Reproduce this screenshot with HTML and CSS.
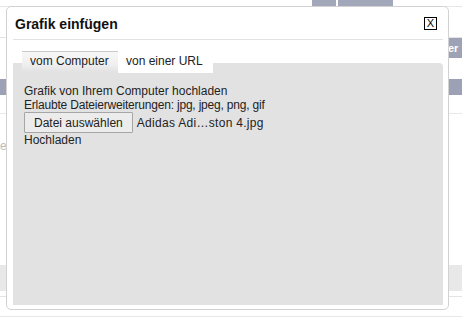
FILE: index.html
```html
<!DOCTYPE html>
<html lang="de">

<head>
  <meta charset="UTF-8">
  <meta name="viewport" content="width=device-width, initial-scale=1.0">
  <title>Grafik einfügen</title>
  <link rel="stylesheet" href="styles.css">
</head>

<body>
  <!-- page behind the dialog -->
  <div class="page">
    <div class="pager">
      <span class="pbtn pbtn_small"></span>
      <span class="pbtn pbtn_wide"></span>
    </div>
    <div class="toolbar">
      <span class="tbtn">er</span>
    </div>
    <div class="headbar"></div>
    <div class="rowline"></div>
    <div class="cell">e</div>
    <div class="footbar"></div>
    <div class="footline"></div>
  </div>

  <div class="dialog">
    <div class="dialog_head">
      <h1>Grafik einfügen</h1>
      <a href="javascript:;" class="close">X</a>
    </div>
    <ul class="tabs">
      <li><a href="javascript:;" class="tab active">vom Computer</a></li>
      <li><a href="javascript:;" class="tab">von einer URL</a></li>
    </ul>
    <div class="panel">
      <p>Grafik von Ihrem Computer hochladen</p>
      <p class="narrow">Erlaubte Dateierweiterungen: jpg, jpeg, png, gif</p>
      <div class="file">
        <button class="file_btn">Datei auswählen</button>
        <span class="file_name">Adidas Adi…ston 4.jpg</span>
      </div>
      <p>Hochladen</p>
    </div>
  </div>
</body>

</html>
```

FILE: styles.css
```css
* {
  margin: 0;
  padding: 0;
  box-sizing: border-box;
}

body {
  position: relative;
  width: 462px;
  height: 321px;
  overflow: hidden;
  background-color: #fff;
  font-family: "Liberation Sans", Arial, sans-serif;
  font-size: 12px;
  color: #222;
}

ul {
  list-style: none;
}

a {
  text-decoration: none;
  color: inherit;
}

/* background page */
.pager {
  display: flex;
  gap: 2px;
  height: 7px;
  padding-left: 312px;
  border-bottom: 1px solid #e6e6e6;
}

.pbtn {
  display: block;
  height: 7px;
  background-color: #a3a7ba;
}

.pbtn_small {
  width: 24px;
}

.pbtn_wide {
  width: 55px;
}

.toolbar {
  display: flex;
  justify-content: flex-end;
  height: 20px;
  margin-top: 30px;
  border-top: 1px solid #e3e3e3;
}

.tbtn {
  display: block;
  width: 15px;
  height: 20px;
  padding-left: 1px;
  background-color: #9ea2b7;
  color: #fff;
  font-size: 11px;
  font-weight: bold;
  line-height: 20px;
}

.headbar {
  height: 16px;
  margin-top: 22px;
  background-color: #9da1b6;
}

.rowline {
  height: 1px;
  margin-top: 18px;
  background-color: #e8e8e8;
}

.cell {
  margin-top: 25px;
  color: #bbb;
  font-size: 12px;
  line-height: 14px;
}

.footbar {
  height: 26px;
  margin-top: 112px;
  background-color: #e8e8e8;
}

.footline {
  height: 21px;
  margin-top: 5px;
  border-top: 1px solid #e4e4e4;
  border-bottom: 1px solid #e8e8e8;
}

/* dialog */
.dialog {
  position: absolute;
  left: 6px;
  top: 6px;
  width: 443px;
  height: 304px;
  padding: 0 5px 4px 6px;
  background-color: #fff;
  border: 1px solid #d2d2d2;
  border-radius: 5px;
  display: flex;
  flex-direction: column;
}

.dialog_head {
  display: flex;
  justify-content: space-between;
  align-items: center;
  height: 33px;
  padding: 1px 6px 0 2px;
  border-bottom: 1px solid #e2e2e2;
}

.dialog_head h1 {
  font-size: 14px;
  font-weight: bold;
  color: #111;
}

.close {
  display: block;
  width: 13px;
  height: 13px;
  border: 1px solid #000;
  font-size: 11px;
  line-height: 11px;
  text-align: center;
  color: #000;
}

.tabs {
  position: relative;
  z-index: 1;
  display: flex;
  height: 21px;
  margin: 11px 0 -9px 9px;
}

.tab {
  display: block;
  height: 21px;
  padding: 0 8px;
  line-height: 19px;
  color: #222;
  background-color: #fff;
}

.tab.active {
  width: 96px;
  border-top: 1px solid #c9c9c9;
  background: linear-gradient(#f7f7f7, #f0f0f0 60%, #e2e2e2);
}

.tab:not(.active) {
  margin-top: 1px;
  width: 95px;
}

.panel {
  flex: 1;
  padding: 21px 11px 0;
  background-color: #e2e2e2;
  border-radius: 0 4px 0 0;
  line-height: 14px;
}

.narrow {
  letter-spacing: -0.2px;
}

.file {
  display: flex;
  align-items: center;
  height: 21px;
}

.file_btn {
  height: 21px;
  padding: 0 9px;
  font-family: "Liberation Sans", Arial, sans-serif;
  font-size: 12px;
  color: #222;
  background-color: #ececec;
  border: 1px solid #a6a6a6;
  border-radius: 1px;
}

.file_name {
  margin-left: 4px;
  letter-spacing: 0.3px;
}
```
